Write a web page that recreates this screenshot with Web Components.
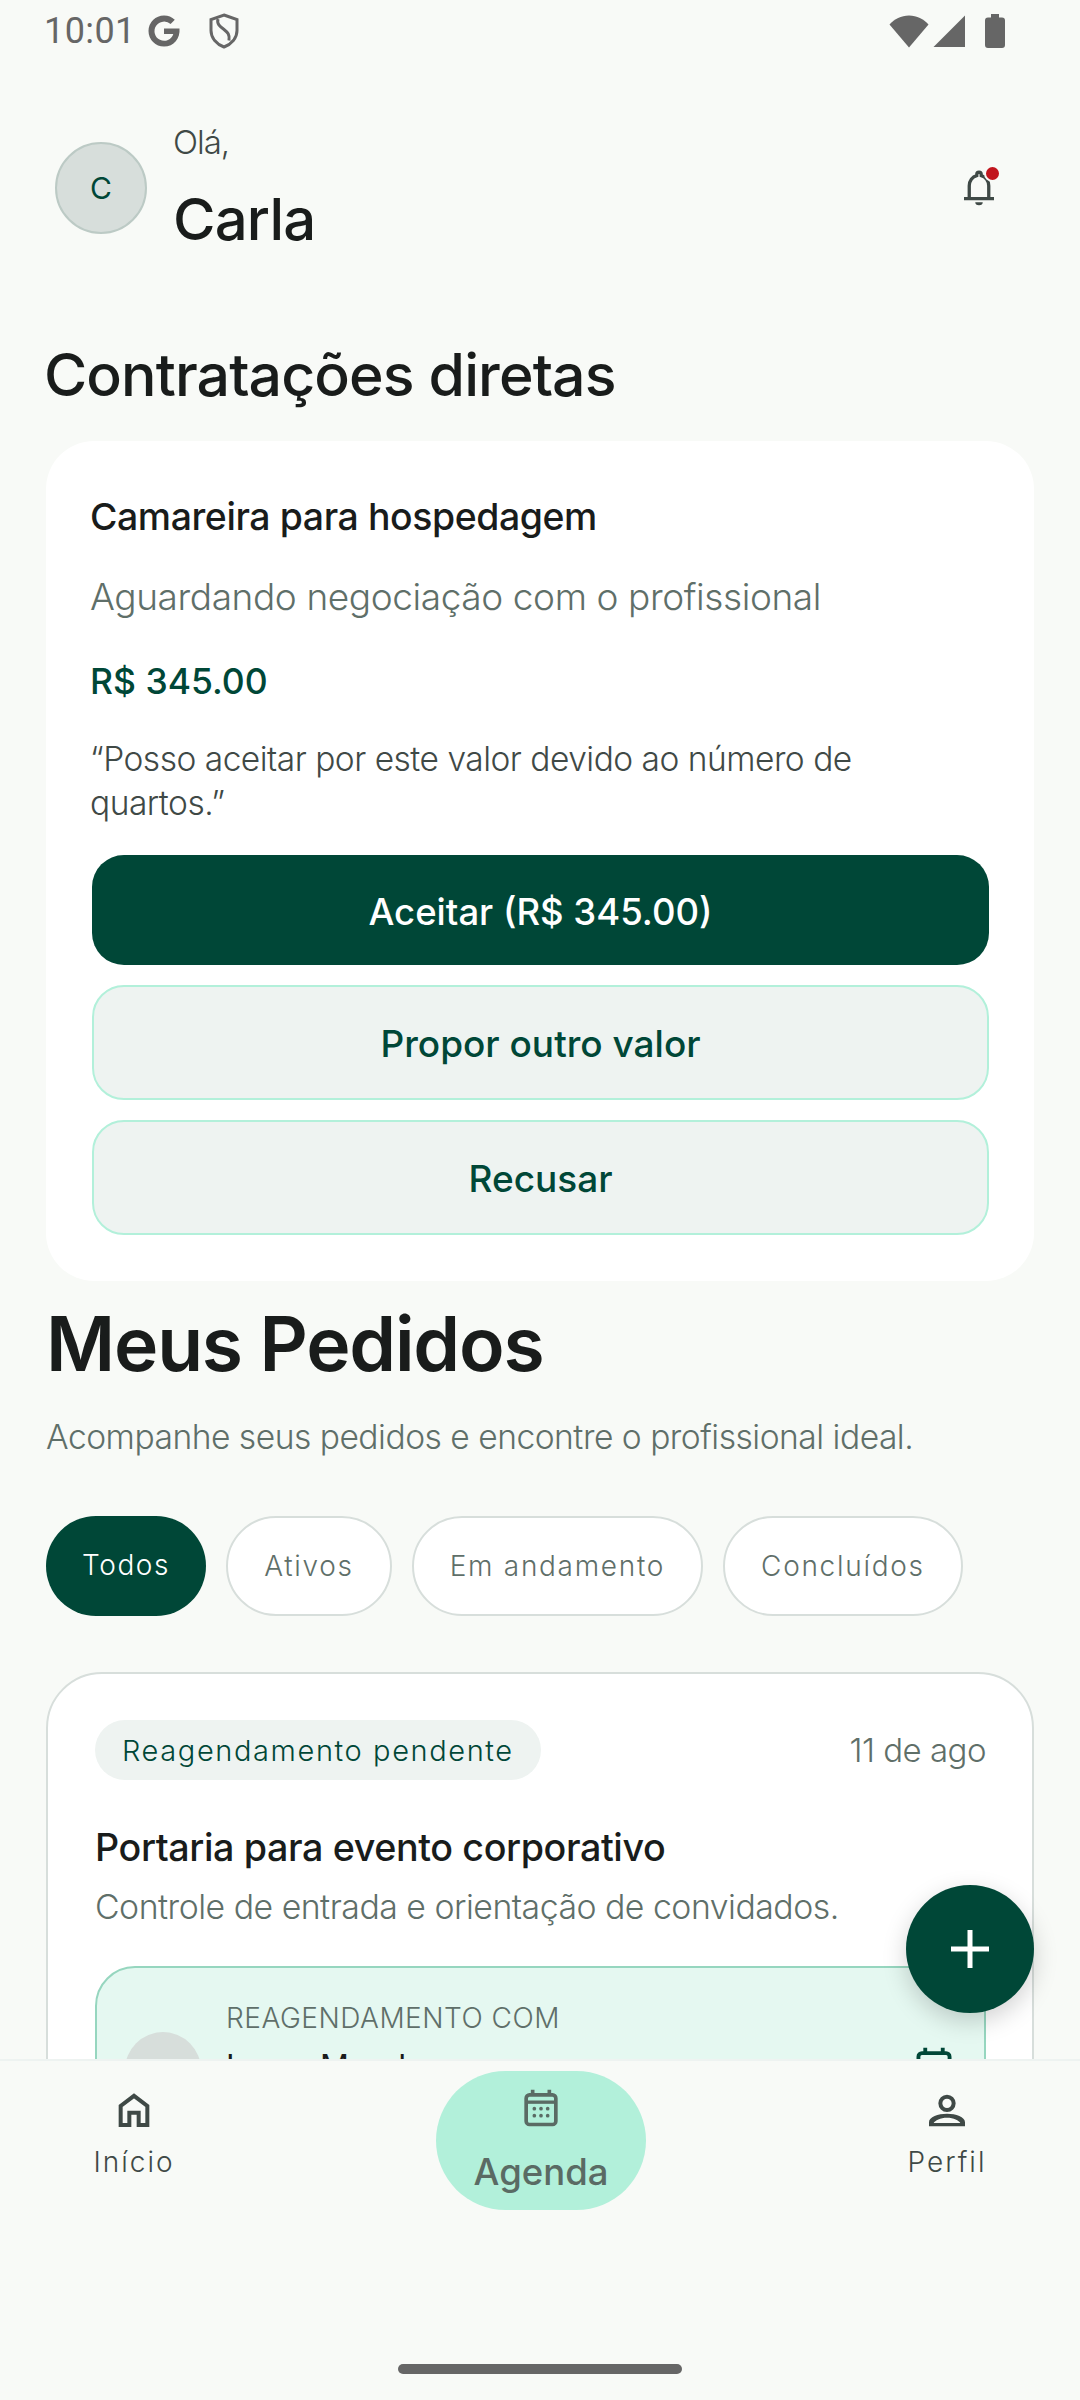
<!DOCTYPE html>
<html lang="pt-BR">
<head>
<meta charset="utf-8">
<title>Meus Pedidos</title>
<style>
    html, body { margin: 0; padding: 0; background: #f8faf7; }
    body { font-family: 'Inter', 'Noto Sans', sans-serif; }
</style>
</head>
<body>
<app-screen>
    <status-bar slot="status"></status-bar>
    <user-header name="Carla" initial="C"></user-header>
    <h-title>Contratações diretas</h-title>
    <offer-card title="Camareira para hospedagem" status="Aguardando negociação com o profissional" price="R$ 345.00" quote="“Posso aceitar por este valor devido ao número de quartos.”">
        <action-button primary>Aceitar (R$ 345.00)</action-button>
        <action-button>Propor outro valor</action-button>
        <action-button>Recusar</action-button>
    </offer-card>
    <page-intro title="Meus Pedidos" text="Acompanhe seus pedidos e encontre o profissional ideal."></page-intro>
    <filter-row>
        <filter-chip active>Todos</filter-chip>
        <filter-chip>Ativos</filter-chip>
        <filter-chip>Em andamento</filter-chip>
        <filter-chip>Concluídos</filter-chip>
    </filter-row>
    <order-card badge="Reagendamento pendente" date="11 de ago" title="Portaria para evento corporativo" text="Controle de entrada e orientação de convidados." label="REAGENDAMENTO COM" person="Laura Mendes"></order-card>
    <fab-button slot="fab"></fab-button>
    <bottom-nav slot="nav"></bottom-nav>
</app-screen>

<script>
const ICONS = {
    bell: '<path d="M5.5 19V10.5a6.5 7 0 0 1 5-6.8V3a1.5 1.5 0 0 1 3 0v.7a6.5 7 0 0 1 5 6.8V19" fill="none" stroke="currentColor" stroke-width="2.2" transform="translate(0 1)"/><path d="M2 19h20v2.2H2zM9.5 22.5h5a2.5 2 0 0 1-5 0z" fill="currentColor"/>',
    home: '<path d="M4 21V9.6L12 3.5l8 6.1V21h-5.2v-7.4H9.200V21z" fill="none" stroke="currentColor" stroke-width="2.4"/>',
    calendar: '<path d="M7 1v3M17 1v3" stroke="currentColor" stroke-width="2.200" fill="none"/><rect x="3.100" y="4.100" width="17.800" height="17.800" rx="2" fill="none" stroke="currentColor" stroke-width="2.200"/><path d="M3 8.500h18" stroke="currentColor" stroke-width="2" fill="none"/><g fill="currentColor"><circle cx="8" cy="12.400" r="1.100"/><circle cx="12" cy="12.400" r="1.100"/><circle cx="16" cy="12.400" r="1.100"/><circle cx="8" cy="16.600" r="1.100"/><circle cx="12" cy="16.600" r="1.100"/><circle cx="16" cy="16.600" r="1.100"/></g>',
    person: '<circle cx="12" cy="8" r="4" fill="none" stroke="currentColor" stroke-width="2.400"/><path d="M1.200 21.800v-2.500c0-3 5.400-5 10.800-5s10.800 2 10.800 5v2.500zM4 19.800h16c-.8-1.600-4-3.200-8-3.200s-7.200 1.600-8 3.200z" fill="currentColor" fill-rule="evenodd"/>'
};

class AppScreen extends HTMLElement {
    constructor() {
        super();
        this.attachShadow({ mode: 'open' });
        this.shadowRoot.innerHTML = `
            <style>
                :host {
                    display: flex;
                    flex-direction: column;
                    width: 1080px;
                    height: 2400px;
                    position: relative;
                    overflow: hidden;
                    background: #f8faf7;
                    font-family: 'Inter', 'Noto Sans', sans-serif;
                }
                .content {
                    height: 2059px;
                    flex: none;
                    overflow: hidden;
                }
                .fab { position: absolute; left: 906px; top: 1885px; }
            </style>
            <slot name="status"></slot>
            <div class="content"><slot></slot></div>
            <div class="fab"><slot name="fab"></slot></div>
            <slot name="nav"></slot>
        `;
    }
}

class StatusBar extends HTMLElement {
    constructor() {
        super();
        this.attachShadow({ mode: 'open' });
        this.shadowRoot.innerHTML = `
            <style>
                :host {
                    display: flex;
                    align-items: center;
                    height: 62px;
                    margin-bottom: -62px;
                    padding: 0 75px 0 44px;
                    color: #666;
                    font-size: 36px;
                    position: relative;
                    z-index: 1;
                }
                .time { font-family: 'Roboto', sans-serif; letter-spacing: 0.4px; margin-right: 11px; }
                svg { display: block; fill: currentColor; }
                .right { margin-left: auto; display: flex; align-items: center; }
            </style>
            <span class="time">10:01</span>
            <svg width="34" height="34" viewBox="0 0 34 34" style="margin-right:27px"><path d="M17 1.500a15.500 15.500 0 0 1 10.800 4.300l-4.200 4.300A9.600 9.600 0 1 0 26.300 20H17v-5.600h15.500c.9 9.800-5.600 18.100-15.500 18.100a15.500 15.500 0 0 1 0-31z"/></svg>
            <svg width="32" height="36" viewBox="0 0 32 36"><path d="M16 2 29 6.500v11c0 7.500-5.500 13.500-13 16.500C8.500 31 3 25 3 17.500v-11z" fill="none" stroke="currentColor" stroke-width="3"/><path d="M10 6c-1.500 5 2 7.500 6 10.500 3.500 2.800 6 5 5 11" fill="none" stroke="currentColor" stroke-width="3"/></svg>
            <div class="right">
                <svg width="40" height="33" viewBox="0 0 40 33"><path d="M20 32.500 .5 9.500C5.500 4 12 .5 20 .5s14.500 3.500 19.500 9z"/></svg>
                <svg width="33" height="33" viewBox="0 0 33 33" style="margin-left:4px"><path d="M32 .5V32H.5z"/></svg>
                <svg width="20" height="34" viewBox="0 0 20 34" style="margin-left:19px"><path d="M6 0h8v3.500h3a3 3 0 0 1 3 3V31a3 3 0 0 1-3 3H3a3 3 0 0 1-3-3V6.500a3 3 0 0 1 3-3h3z"/></svg>
            </div>
        `;
    }
}

class UserHeader extends HTMLElement {
    constructor() {
        super();
        this.attachShadow({ mode: 'open' });
        const name = this.getAttribute('name');
        const initial = this.getAttribute('initial');
        this.shadowRoot.innerHTML = `
            <style>
                :host {
                    display: flex;
                    align-items: center;
                    padding: 122px 79px 0 55px;
                    height: 130px;
                }
                .avatar {
                    width: 92px;
                    height: 92px;
                    margin-top: 2px;
                    box-sizing: border-box;
                    border-radius: 50%;
                    background: #d7dedb;
                    border: 2px solid #bccac5;
                    color: #004737;
                    font-size: 30px;
                    display: flex;
                    align-items: center;
                    justify-content: center;
                    flex: none;
                }
                .names { margin-left: 26px; display: flex; flex-direction: column; flex: 1; }
                .hello { font-size: 33px; line-height: 44px; color: #3f4946; letter-spacing: -1px; font-weight: 300; }
                .name { font-size: 58px; line-height: 72px; margin-top: 19px; color: #191c1b; font-weight: 500; letter-spacing: -.8px; }
                .bell { width: 40px; height: 44px; position: relative; color: #3f4946; }
                .bell svg { display: block; width: 36px; height: 40px; margin-top: 3px; }
                .dot {
                    position: absolute;
                    right: 0;
                    top: 0;
                    width: 13px;
                    height: 13px;
                    background: #c1151d;
                    border: 2px solid #f8faf7;
                    border-radius: 50%;
                }
            </style>
            <span class="avatar">${initial}</span>
            <div class="names">
                <span class="hello">Olá,</span>
                <span class="name">${name}</span>
            </div>
            <div class="bell">
                <svg viewBox="0 0 24 26">${ICONS.bell}</svg>
                <span class="dot"></span>
            </div>
        `;
    }
}

class HTitle extends HTMLElement {
    constructor() {
        super();
        this.attachShadow({ mode: 'open' });
        this.shadowRoot.innerHTML = `
            <style>
                :host {
                    display: block;
                    margin: 87px 0 0 44px;
                    font-size: 59px;
                    line-height: 72px;
                    font-weight: 500;
                    color: #191c1b;
                    letter-spacing: -.9px;
                    height: 72px;
                }
            </style>
            <slot></slot>
        `;
    }
}

class OfferCard extends HTMLElement {
    constructor() {
        super();
        this.attachShadow({ mode: 'open' });
        this.shadowRoot.innerHTML = `
            <style>
                :host {
                    display: block;
                    margin: 30px 46px 0;
                    padding: 52px 45px 46px 44px;
                    height: 840px;
                    box-sizing: border-box;
                    background: #fff;
                    border-radius: 48px;
                }
                .title { font-size: 37.400px; line-height: 48px; font-weight: 500; color: #191c1b; letter-spacing: -.4px; }
                .status { font-size: 37px; line-height: 48px; margin-top: 32px; color: #5f6f69; font-weight: 300; letter-spacing: -.4px; }
                .price { font-size: 35.500px; line-height: 48px; margin-top: 37px; color: #004737; font-weight: 500; }
                .quote { font-size: 33.500px; line-height: 44px; margin-top: 31px; color: #3f4946; letter-spacing: -.5px; font-weight: 300; width: 800px; }
                .actions { display: flex; flex-direction: column; gap: 20px; margin-top: 30px; }
            </style>
            <div class="title"></div>
            <div class="status"></div>
            <div class="price"></div>
            <div class="quote"></div>
            <div class="actions"><slot></slot></div>
        `;
        this.shadowRoot.querySelector('.title').textContent = this.getAttribute('title');
        this.shadowRoot.querySelector('.status').textContent = this.getAttribute('status');
        this.shadowRoot.querySelector('.price').textContent = this.getAttribute('price');
        this.shadowRoot.querySelector('.quote').textContent = this.getAttribute('quote');
        this.removeAttribute('title');
    }
}

class ActionButton extends HTMLElement {
    constructor() {
        super();
        this.attachShadow({ mode: 'open' });
        this.shadowRoot.innerHTML = `
            <style>
                :host {
                    display: flex;
                    align-items: center;
                    justify-content: center;
                    height: 115px;
                    box-sizing: border-box;
                    padding-top: 2px;
                    border-radius: 32px;
                    border: 2px solid #b2f0da;
                    background: #eef3f1;
                    color: #004737;
                    font-size: 37px;
                    font-weight: 500;
                    margin: 0 0 0 2px;
                }
                :host([primary]) {
                    height: 110px;
                    padding-top: 3px;
                    background: #004737;
                    border: 0;
                    color: #fff;
                    font-size: 36.500px;
                }
            </style>
            <slot></slot>
        `;
    }
}

class PageIntro extends HTMLElement {
    constructor() {
        super();
        this.attachShadow({ mode: 'open' });
        this.shadowRoot.innerHTML = `
            <style>
                :host { display: block; margin: 17px 0 0 46px; }
                .title { font-size: 75px; line-height: 92px; font-weight: 600; color: #191c1b; letter-spacing: -1.200px; }
                .text { font-size: 33.600px; line-height: 44px; margin-top: 25px; color: #5f6f69; letter-spacing: -.5px; font-weight: 300; }
            </style>
            <div class="title"></div>
            <div class="text"></div>
        `;
        this.shadowRoot.querySelector('.title').textContent = this.getAttribute('title');
        this.shadowRoot.querySelector('.text').textContent = this.getAttribute('text');
        this.removeAttribute('title');
    }
}

class FilterRow extends HTMLElement {
    constructor() {
        super();
        this.attachShadow({ mode: 'open' });
        this.shadowRoot.innerHTML = `
            <style>
                :host { display: flex; gap: 20px; margin: 57px 0 0 46px; }
            </style>
            <slot></slot>
        `;
    }
}

class FilterChip extends HTMLElement {
    constructor() {
        super();
        this.attachShadow({ mode: 'open' });
        this.shadowRoot.innerHTML = `
            <style>
                :host {
                    display: flex;
                    align-items: center;
                    height: 100px;
                    padding: 0 36px;
                    box-sizing: border-box;
                    border-radius: 50px;
                    border: 2px solid #d7dedb;
                    background: #fff;
                    color: #5f6f69;
                    font-size: 28px;
                    letter-spacing: 1.700px;
                    font-weight: 300;
                }
                :host([active]) {
                    background: #004737;
                    border: 0;
                    color: #fff;
                    padding: 0 36px 3px;
                    letter-spacing: 1.600px;
                }
            </style>
            <slot></slot>
        `;
    }
}

class OrderCard extends HTMLElement {
    constructor() {
        super();
        this.attachShadow({ mode: 'open' });
        const get = (k) => this.getAttribute(k);
        this.shadowRoot.innerHTML = `
            <style>
                :host {
                    display: block;
                    margin: 56px 46px 0;
                    padding: 46px 46px 40px 47px;
                    box-sizing: border-box;
                    height: 700px;
                    background: #fff;
                    border: 2px solid #d7dedb;
                    border-radius: 56px;
                }
                .top { display: flex; align-items: center; justify-content: space-between; }
                .badge {
                    height: 60px;
                    padding: 0 27px;
                    display: flex;
                    align-items: center;
                    border-radius: 30px;
                    background: #eef3f1;
                    color: #004737;
                    font-size: 29px;
                    font-weight: 300;
                    letter-spacing: 1.600px;
                }
                .date { font-size: 33px; color: #5f6f69; font-weight: 300; letter-spacing: -.5px; }
                .title { font-size: 37.700px; line-height: 48px; font-weight: 500; color: #191c1b; margin-top: 43px; letter-spacing: -.4px; }
                .text { font-size: 33.800px; line-height: 44px; margin-top: 14px; color: #5f6f69; font-weight: 300; letter-spacing: -.5px; }
                .box {
                    margin-top: 37px;
                    height: 200px;
                    box-sizing: border-box;
                    border: 2px solid #96d6bf;
                    border-radius: 40px;
                    background: #e5f8f1;
                    display: flex;
                    align-items: flex-start;
                    padding: 32px 29px 0 28px;
                }
                .pic { width: 76px; height: 76px; border-radius: 50%; background: #d7dedb; flex: none; margin-top: 32px; }
                .who { margin-left: 25px; flex: 1; }
                .label { font-size: 28px; line-height: 36px; color: #5f6f69; letter-spacing: .5px; font-weight: 300; }
                .person { font-size: 32px; line-height: 44px; color: #191c1b; margin-top: 9px; font-weight: 400; }
                svg { width: 42px; height: 42px; color: #004737; margin-top: 46px; display: block; }
            </style>
            <div class="top">
                <span class="badge">${get('badge')}</span>
                <span class="date">${get('date')}</span>
            </div>
            <div class="title">${get('title')}</div>
            <div class="text">${get('text')}</div>
            <div class="box">
                <span class="pic"></span>
                <div class="who">
                    <div class="label">${get('label')}</div>
                    <div class="person">${get('person')}</div>
                </div>
                <svg viewBox="0 0 24 24">${ICONS.calendar}</svg>
            </div>
        `;
        this.removeAttribute('title');
    }
}

class FabButton extends HTMLElement {
    constructor() {
        super();
        this.attachShadow({ mode: 'open' });
        this.shadowRoot.innerHTML = `
            <style>
                :host {
                    display: flex;
                    align-items: center;
                    justify-content: center;
                    width: 128px;
                    height: 128px;
                    border-radius: 50%;
                    background: #004737;
                    box-shadow: 0 8px 24px rgba(0, 0, 0, .18);
                }
                svg { width: 38px; height: 38px; display: block; }
            </style>
            <svg viewBox="0 0 38 38"><path d="M16.500 0h5v16.500H38v5H21.500V38h-5V21.500H0v-5h16.500z" fill="#fff"/></svg>
        `;
    }
}

class BottomNav extends HTMLElement {
    constructor() {
        super();
        this.attachShadow({ mode: 'open' });
        this.shadowRoot.innerHTML = `
            <style>
                :host {
                    display: block;
                    height: 341px;
                    box-sizing: border-box;
                    border-top: 2px solid #eef3f1;
                    background: #f8faf7;
                    position: relative;
                }
                .items {
                    display: grid;
                    grid-template-columns: 268px 1fr 266px;
                    height: 140px;
                    margin-top: 10px;
                }
                nav-item { justify-self: center; }
                .handle {
                    position: absolute;
                    left: 398px;
                    top: 303px;
                    width: 284px;
                    height: 10px;
                    border-radius: 5px;
                    background: #666;
                }
            </style>
            <div class="items">
                <nav-item icon="home" label="Início"></nav-item>
                <nav-item icon="calendar" label="Agenda" active></nav-item>
                <nav-item icon="person" label="Perfil"></nav-item>
            </div>
            <div class="handle"></div>
        `;
    }
}

class NavItem extends HTMLElement {
    constructor() {
        super();
        this.attachShadow({ mode: 'open' });
        const icon = this.getAttribute('icon');
        this.shadowRoot.innerHTML = `
            <style>
                :host {
                    display: flex;
                    flex-direction: column;
                    align-items: center;
                    color: #3f4946;
                    padding-top: 19px;
                    font-size: 28px;
                    font-weight: 300;
                    letter-spacing: 2px;
                }
                :host([active]) {
                    width: 210px;
                    height: 139px;
                    box-sizing: border-box;
                    padding-top: 17px;
                    background: #b2f0da;
                    border-radius: 70px;
                    color: #5a6b64;
                    font-size: 36.500px;
                    font-weight: 500;
                    letter-spacing: 0;
                }
                svg { width: 40px; height: 40px; display: block; }
                span { line-height: 40px; margin-top: 12px; }
                :host([active]) span { margin-top: 24px; }
            </style>
            <svg viewBox="0 0 24 24">${ICONS[icon]}</svg>
            <span>${this.getAttribute('label')}</span>
        `;
    }
}

customElements.define('app-screen', AppScreen);
customElements.define('status-bar', StatusBar);
customElements.define('user-header', UserHeader);
customElements.define('h-title', HTitle);
customElements.define('offer-card', OfferCard);
customElements.define('action-button', ActionButton);
customElements.define('page-intro', PageIntro);
customElements.define('filter-row', FilterRow);
customElements.define('filter-chip', FilterChip);
customElements.define('order-card', OrderCard);
customElements.define('fab-button', FabButton);
customElements.define('bottom-nav', BottomNav);
customElements.define('nav-item', NavItem);
</script>
</body>
</html>
